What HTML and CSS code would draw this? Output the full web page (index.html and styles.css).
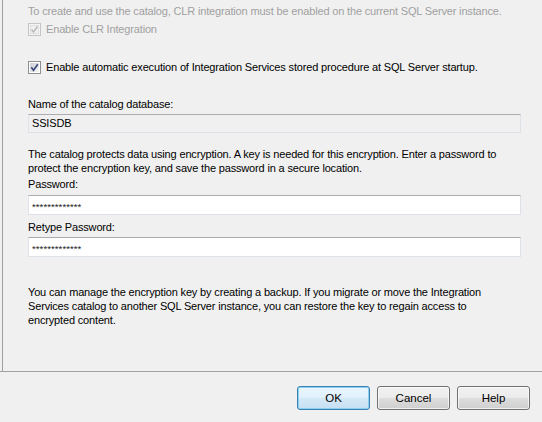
FILE: index.html
```html
<!DOCTYPE html>
<html>
<head>
<meta charset="utf-8">
<link rel="stylesheet" href="styles.css">
</head>
<body>
<div class="main">
  <div class="content">
    <div class="line note disabled">To create and use the catalog, CLR integration must be enabled on the current SQL Server instance.</div>
    <div class="line check check-clr disabled">
      <svg class="cb" width="13" height="13" viewBox="0 0 13 13">
        <rect x="0.5" y="0.5" width="12" height="12" fill="#f4f4f4" stroke="#c5c5c5"/>
        <rect x="2.5" y="2.5" width="8" height="8" fill="#f0f0f0" stroke="#e0e0e0"/>
        <path d="M3.5 6.5 L5.5 9 L9.5 3.5" fill="none" stroke="#b9b9b9" stroke-width="1.4"/>
      </svg>
      <span>Enable CLR Integration</span>
    </div>
    <div class="line check check-auto">
      <svg class="cb" width="13" height="13" viewBox="0 0 13 13">
        <defs>
          <linearGradient id="g1" x1="0" y1="0" x2="1" y2="1">
            <stop offset="0" stop-color="#cbcfd5"/>
            <stop offset="1" stop-color="#f6f6f6"/>
          </linearGradient>
        </defs>
        <rect x="0.5" y="0.5" width="12" height="12" fill="#fff" stroke="#8e8f8f"/>
        <rect x="2" y="2" width="9" height="9" fill="url(#g1)"/>
        <path d="M3.3 6.3 L5.5 9.2 L9.8 3.2" fill="none" stroke="#3d4a7a" stroke-width="1.7"/>
      </svg>
      <span>Enable automatic execution of Integration Services stored procedure at SQL Server startup.</span>
    </div>
    <div class="line label label-name">Name of the catalog database:</div>
    <div class="field readonly">SSISDB</div>
    <p class="para para-enc">The catalog protects data using encryption. A key is needed for this encryption. Enter a password to protect the encryption key, and save the password in a secure location.</p>
    <div class="line label label-pw">Password:</div>
    <div class="field pw">*************</div>
    <div class="line label label-retype">Retype Password:</div>
    <div class="field pw pw2">*************</div>
    <p class="para para-key">You can manage the encryption key by creating a backup. If you migrate or move the Integration Services catalog to another SQL Server instance, you can restore the key to regain access to encrypted content.</p>
  </div>
</div>
<div class="footer">
  <button class="btn default">OK</button>
  <button class="btn">Cancel</button>
  <button class="btn">Help</button>
</div>
</body>
</html>
```

FILE: styles.css
```css
html, body {
  margin: 0;
  padding: 0;
  background: #f0f0f0;
}
body {
  font-family: "Liberation Sans", Arial, sans-serif;
  font-size: 11px;
  letter-spacing: -0.16px;
  color: #000;
  width: 542px;
  height: 422px;
  overflow: hidden;
}
.main {
  height: 371px;
  padding-left: 2px;
  box-sizing: border-box;
}
.content {
  height: 371px;
  border-left: 1px solid #a0a0a0;
  padding-left: 25px;
  box-sizing: border-box;
  overflow: hidden;
}
.line {
  line-height: 14px;
  height: 14px;
  white-space: nowrap;
}
.disabled {
  color: #a0a0a0;
}
.note {
  padding-top: 4px;
}
.check {
  display: flex;
  align-items: center;
  gap: 5px;
}
.cb {
  flex: none;
  display: block;
}
.check-clr {
  margin-top: 4px;
}
.check-auto {
  margin-top: 24px;
}
.label-name {
  margin-top: 23px;
}
.field {
  width: 493px;
  box-sizing: border-box;
  border: 1px solid #dde2e8;
  border-top-color: #abadb3;
  padding-left: 3px;
}
.readonly {
  margin-top: 3px;
  height: 19px;
  line-height: 17px;
  background: #f0f0f0;
  border-left-color: #e2e3ea;
}
.para {
  margin: 14px 0 0 0;
  width: 478px;
  line-height: 14px;
}
.label-pw {
  margin-top: 2px;
}
.pw {
  margin-top: 4px;
  height: 20px;
  line-height: 22px;
  background: #fff;
  font-size: 9.5px;
  letter-spacing: 0.1px;
  color: #222;
  border-left-color: #e2e3ea;
}
.label-retype {
  margin-top: 5px;
}
.pw2 {
  margin-top: 3px;
}
.para-key {
  margin-top: 28px;
}
.footer {
  border-top: 1px solid #a0a0a0;
  display: flex;
  justify-content: flex-end;
  gap: 7px;
  padding: 14px 12px 0 0;
}
.btn {
  width: 73px;
  height: 24px;
  padding: 0;
  font-family: "Liberation Sans", Arial, sans-serif;
  font-size: 11.5px;
  letter-spacing: 0;
  color: #000;
  border: 1px solid #707070;
  border-radius: 3px;
  background: linear-gradient(to bottom, #f2f2f2 0%, #ebebeb 48%, #dddddd 52%, #cfcfcf 100%);
  box-shadow: inset 0 0 0 1px rgba(255,255,255,0.7);
}
.btn.default {
  border-color: #3c7fb1;
  box-shadow: inset 0 0 0 1px #8ad0f0;
  background: linear-gradient(to bottom, #eaf6fd 0%, #e0f0fb 48%, #d4e9f7 52%, #c6dff2 100%);
}
```
